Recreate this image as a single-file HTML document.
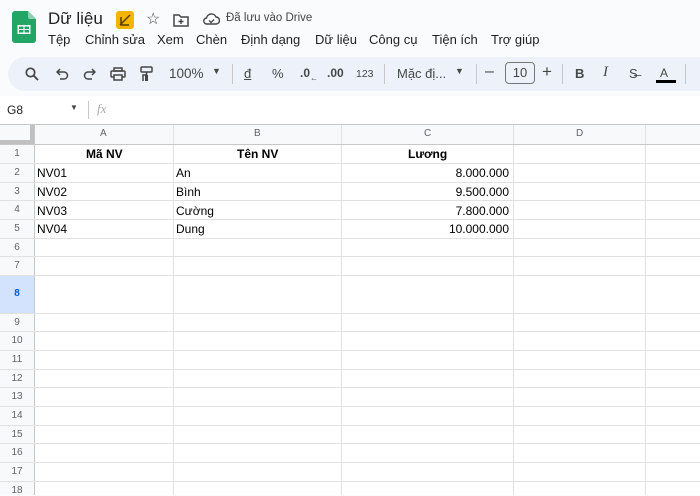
<!DOCTYPE html>
<html><head><meta charset="utf-8"><style>
*{margin:0;padding:0;box-sizing:border-box}
body{width:700px;height:495px;overflow:hidden;background:#f9fbfd;font-family:"Liberation Sans",Arial,sans-serif;position:relative;color:#1f1f1f}
.a{position:absolute}
.menu span{position:absolute;top:0}
.tb{position:absolute;top:57px;left:8px;width:720px;height:34px;background:#edf2fa;border-radius:17px}
.ti{position:absolute;top:66px;font-size:13px;color:#444746}
.sep{position:absolute;top:64px;width:1px;height:20px;background:#c7c7c7}
.grid{position:absolute;left:0;top:124px;width:700px;height:371px;background:#fff}
.vl{position:absolute;top:0;width:1px;height:371px;background:#e1e1e1}
.hl{position:absolute;left:0;width:700px;height:1px;background:#e1e1e1}
.rn{position:absolute;left:0;width:34px;text-align:center;font-size:10px;color:#5f6368}
.cell{position:absolute;font-size:12px;color:#000}
</style></head><body>
<svg class="a" style="left:12px;top:11px" width="24" height="32" viewBox="0 0 24 32"><path d="M3 0h13l8 8v21a3 3 0 0 1-3 3H3a3 3 0 0 1-3-3V3a3 3 0 0 1 3-3z" fill="#23a566"/><path d="M16 0l8 8h-6a2 2 0 0 1-2-2z" fill="#8ed1b1"/><rect x="5.5" y="14" width="13" height="9" fill="#fff"/><rect x="7" y="15.5" width="4.5" height="2.5" fill="#23a566"/><rect x="12.5" y="15.5" width="4.5" height="2.5" fill="#23a566"/><rect x="7" y="19" width="4.5" height="2.5" fill="#23a566"/><rect x="12.5" y="19" width="4.5" height="2.5" fill="#23a566"/></svg>
<div class="a" style="left:48px;top:9px;font-size:17px">Dữ liệu</div>
<div class="a" style="left:116px;top:11px;width:18px;height:18px;background:#f4b400;border-radius:3px"></div>
<svg class="a" style="left:119px;top:14px" width="12" height="12"><path d="M1 11L11 1M2 3v8h8" stroke="#5a3d00" stroke-width="1.5" fill="none"/></svg>
<div class="a" style="left:146px;top:9px;font-size:16px;color:#444">☆</div>
<svg class="a" style="left:173px;top:13px" width="16" height="14"><path d="M1 2h5l2 2h7v9H1z" stroke="#444" stroke-width="1.5" fill="none"/><path d="M8 6v5M5.5 8.5h5" stroke="#444" stroke-width="1.4"/></svg>
<svg class="a" style="left:202px;top:12px" width="18" height="14"><path d="M5 12h9a3.5 3.5 0 0 0 0-7 5 5 0 0 0-9.5 1A3 3 0 0 0 5 12z" stroke="#444" stroke-width="1.4" fill="none"/><path d="M7 8.5l2 2 3-3" stroke="#444" stroke-width="1.3" fill="none"/></svg>
<div class="a" style="left:226px;top:12px;font-size:11.5px;color:#444">Đã lưu vào Drive</div>
<div class="a menu" style="left:0;top:32px;font-size:13px;white-space:nowrap"><span style="left:48px">Tệp</span><span style="left:85px">Chỉnh sửa</span><span style="left:157px">Xem</span><span style="left:196px">Chèn</span><span style="left:241px">Định dạng</span><span style="left:315px">Dữ liệu</span><span style="left:369px">Công cụ</span><span style="left:432px">Tiện ích</span><span style="left:491px">Trợ giúp</span></div>
<div class="tb"></div>
<svg class="a" style="left:25px;top:67px" width="14" height="14"><circle cx="5.5" cy="5.5" r="4.2" stroke="#444" stroke-width="1.7" fill="none"/><path d="M8.5 8.5l4.5 4.5" stroke="#444" stroke-width="1.9"/></svg>
<svg class="a" style="left:56px;top:68px" width="13" height="12"><path d="M4 1L1 4l3 3M1 4h7a3.5 3.5 0 0 1 0 7H4" stroke="#444" stroke-width="1.5" fill="none"/></svg>
<svg class="a" style="left:83px;top:68px" width="13" height="12"><path d="M9 1l3 3-3 3M12 4H5a3.5 3.5 0 0 0 0 7h4" stroke="#444" stroke-width="1.5" fill="none"/></svg>
<svg class="a" style="left:110px;top:67px" width="16" height="14"><rect x="4" y="1" width="8" height="3" stroke="#444" stroke-width="1.5" fill="none"/><rect x="1" y="4" width="14" height="6" rx="1" stroke="#444" stroke-width="1.5" fill="none"/><rect x="4" y="8" width="8" height="5" fill="#edf2fa" stroke="#444" stroke-width="1.5"/></svg>
<svg class="a" style="left:140px;top:66px" width="13" height="16"><rect x="1" y="1" width="11" height="5" rx="1" stroke="#444" stroke-width="1.5" fill="none"/><path d="M6.5 6v3H3v6" stroke="#444" stroke-width="1.5" fill="none"/><rect x="5" y="9" width="3" height="6" fill="#444"/></svg>
<div class="ti" style="left:169px;top:66px;font-size:13.5px">100%</div>
<div class="ti" style="left:212px;top:66px;font-size:9px">▼</div>
<div class="sep" style="left:232px"></div>
<div class="ti" style="left:244px;font-size:13px;text-decoration:underline">đ</div>
<div class="ti" style="left:272px">%</div>
<div class="ti" style="left:300px;font-size:12px;font-weight:bold">.0<sub style="font-size:8px">←</sub></div>
<div class="ti" style="left:327px;font-size:12px;font-weight:bold">.00</div>
<div class="ti" style="left:356px;top:68px;font-size:10.5px">123</div>
<div class="sep" style="left:384px"></div>
<div class="ti" style="left:397px;font-size:13px">Mặc đị...</div>
<div class="ti" style="left:455px;font-size:9px">▼</div>
<div class="sep" style="left:476px"></div>
<div class="ti" style="left:485px;font-size:16px;top:63px">–</div>
<div class="a" style="left:505px;top:62px;width:30px;height:22px;border:1px solid #747775;border-radius:4px;font-size:13px;text-align:center;line-height:20px;color:#444">10</div>
<div class="ti" style="left:542px;font-size:17px;top:62px">+</div>
<div class="sep" style="left:562px"></div>
<div class="ti" style="left:575px;font-weight:bold">B</div>
<div class="ti" style="left:603px;font-style:italic;font-family:'Liberation Serif',serif;font-size:15px;top:64px">I</div>
<div class="ti" style="left:629px;font-size:13px">S̶</div>
<div class="ti" style="left:660px;font-size:12px">A</div>
<div class="a" style="left:656px;top:80px;width:20px;height:3px;background:#000"></div>
<div class="sep" style="left:685px"></div>
<div class="a" style="left:0;top:96px;width:700px;height:28px;background:#fff"></div>
<div class="a" style="left:7px;top:103px;font-size:12px">G8</div>
<div class="a" style="left:70px;top:103px;font-size:8px;color:#444">▼</div>
<div class="a" style="left:88px;top:101px;width:1px;height:18px;background:#c7c7c7"></div>
<div class="a" style="left:97px;top:101px;font-size:13px;color:#aaa;font-style:italic;font-family:'Liberation Serif',serif">fx</div>
<div class="grid">
<div class="a" style="left:0;top:0;width:700px;height:20px;background:#f8f9fa"></div>
<div class="a" style="left:0;top:0;width:34px;height:371px;background:#f8f9fa"></div>
<div class="a" style="left:0;top:151px;width:34px;height:38px;background:#d3e3fd"></div>
<div class="a" style="left:0;top:0;width:34px;height:20px;border-right:4px solid #c0c0c0;border-bottom:4px solid #c0c0c0;background:#f8f9fa"></div>
<div class="vl" style="left:34px;background:#c7c7c7"></div>
<div class="vl" style="left:173px"></div>
<div class="vl" style="left:341px"></div>
<div class="vl" style="left:513px"></div>
<div class="vl" style="left:645px"></div>
<div class="hl" style="top:0;background:#c7c7c7"></div>
<div class="hl" style="top:20px;background:#c7c7c7"></div>
<div class="hl" style="top:39px"></div><div class="hl" style="top:58px"></div><div class="hl" style="top:76px"></div><div class="hl" style="top:95px"></div><div class="hl" style="top:114px"></div><div class="hl" style="top:132px"></div><div class="hl" style="top:151px"></div><div class="hl" style="top:189px"></div><div class="hl" style="top:207px"></div><div class="hl" style="top:226px"></div><div class="hl" style="top:245px"></div><div class="hl" style="top:263px"></div><div class="hl" style="top:282px"></div><div class="hl" style="top:301px"></div><div class="hl" style="top:319px"></div><div class="hl" style="top:338px"></div><div class="hl" style="top:357px"></div>
<div class="a" style="left:100px;top:4px;font-size:10px;color:#5f6368">A</div>
<div class="a" style="left:254px;top:4px;font-size:10px;color:#5f6368">B</div>
<div class="a" style="left:424px;top:4px;font-size:10px;color:#5f6368">C</div>
<div class="a" style="left:576px;top:4px;font-size:10px;color:#5f6368">D</div>
<div class="rn" style="top:24px">1</div><div class="rn" style="top:43px">2</div><div class="rn" style="top:62px">3</div><div class="rn" style="top:80px">4</div><div class="rn" style="top:99px">5</div><div class="rn" style="top:118px">6</div><div class="rn" style="top:136px">7</div><div class="rn" style="top:164px;color:#0b57d0;font-weight:bold">8</div><div class="rn" style="top:193px">9</div><div class="rn" style="top:211px">10</div><div class="rn" style="top:230px">11</div><div class="rn" style="top:249px">12</div><div class="rn" style="top:267px">13</div><div class="rn" style="top:286px">14</div><div class="rn" style="top:305px">15</div><div class="rn" style="top:323px">16</div><div class="rn" style="top:342px">17</div><div class="rn" style="top:361px">18</div>
<div class="cell" style="left:86px;top:23px;font-weight:bold">Mã NV</div>
<div class="cell" style="left:237px;top:23px;font-weight:bold">Tên NV</div>
<div class="cell" style="left:408px;top:23px;font-weight:bold">Lương</div>
<div class="cell" style="left:37px;top:42px">NV01</div><div class="cell" style="left:37px;top:61px">NV02</div><div class="cell" style="left:37px;top:80px">NV03</div><div class="cell" style="left:37px;top:98px">NV04</div>
<div class="cell" style="left:176px;top:42px">An</div><div class="cell" style="left:176px;top:61px">Bình</div><div class="cell" style="left:176px;top:80px">Cường</div><div class="cell" style="left:176px;top:98px">Dung</div>
<div class="cell" style="right:191px;top:42px">8.000.000</div><div class="cell" style="right:191px;top:61px">9.500.000</div><div class="cell" style="right:191px;top:80px">7.800.000</div><div class="cell" style="right:191px;top:98px">10.000.000</div>
</div>
</body></html>
